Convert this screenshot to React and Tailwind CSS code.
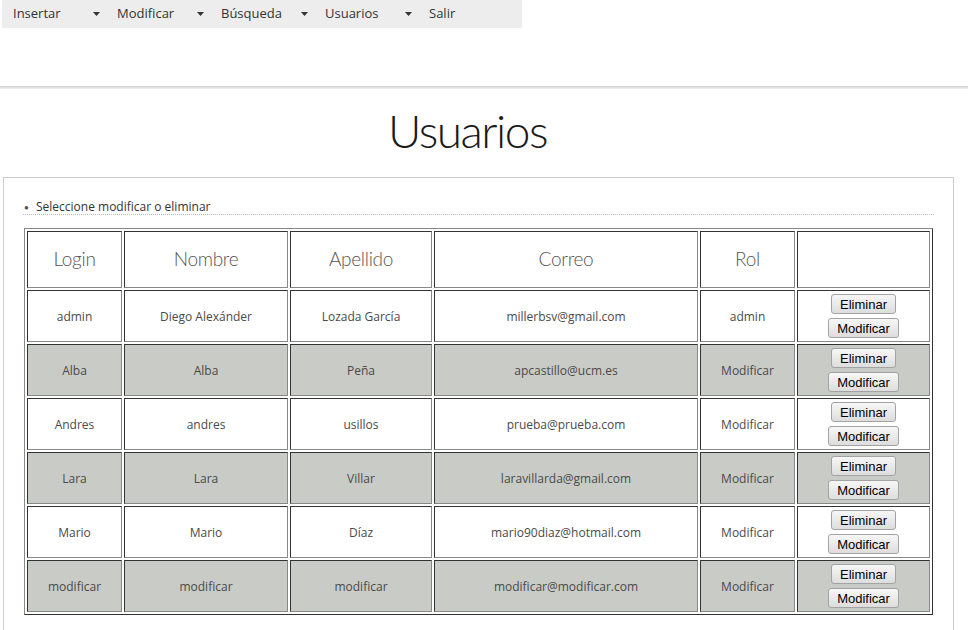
import React from "react";

const rows = [
  ["admin", "Diego Alexánder", "Lozada García", "millerbsv@gmail.com", "admin"],
  ["Alba", "Alba", "Peña", "apcastillo@ucm.es", "Modificar"],
  ["Andres", "andres", "usillos", "prueba@prueba.com", "Modificar"],
  ["Lara", "Lara", "Villar", "laravillarda@gmail.com", "Modificar"],
  ["Mario", "Mario", "Díaz", "mario90diaz@hotmail.com", "Modificar"],
  ["modificar", "modificar", "modificar", "modificar@modificar.com", "Modificar"],
];

const headers = ["Login", "Nombre", "Apellido", "Correo", "Rol", ""];
const navItems = ["Insertar", "Modificar", "Búsqueda", "Usuarios", "Salir"];

function Arrow() {
  return (
    <svg width="7" height="4" viewBox="0 0 7 4" className="block">
      <polygon points="0,0 7,0 3.5,4" fill="#333" />
    </svg>
  );
}

function Btn({ children }) {
  return (
    <button className="h-[20px] px-[8px] border border-[#a3a3a3] rounded-[3px] bg-gradient-to-b from-[#f7f7f7] to-[#dddddd] text-[13px] leading-none text-black font-['Liberation_Sans',Arial,sans-serif]">
      {children}
    </button>
  );
}

export default function App() {
  return (
    <div className="bg-white min-h-[630px] font-['Open_Sans',sans-serif] text-[#444]">
      <nav className="ml-[2px] w-[520px] h-[28px] bg-[#ededed] flex">
        {navItems.map((n, i) => (
          <div key={n} className="w-[104px] flex items-center justify-between pl-[11px] pr-[6px] text-[13px] text-[#333]">
            <span>{n}</span>
            {i < 4 && <Arrow />}
          </div>
        ))}
      </nav>
      <div className="mt-[58px] h-[3px] bg-gradient-to-b from-[#cfcfcf] to-[#f3f3f3]" />
      <div className="h-[88px] flex items-center justify-center pr-[33px] pb-[4px]">
        <h1 className="font-['Lato',sans-serif] font-light text-[46px] leading-none text-[#1a1a1a] tracking-[-1.5px]">
          Usuarios
        </h1>
      </div>
      <div className="ml-[3px] w-[951px] border border-[#cccccc] pl-[19px] pr-[19px] pt-[21px] pb-[40px]">
        <ul>
          <li className="flex items-center h-[16px] border-b border-dotted border-[#bbbbbb] text-[12px] leading-[15px] text-[#333]">
            <span className="w-[13px] pl-[1px] text-[8px] text-[#555]">●</span>
            <span>Seleccione modificar o eliminar</span>
          </li>
        </ul>
        <div className="mt-[13px] ml-[1px] w-[909px] grid grid-cols-[95px_164px_142px_264px_95px_133px] gap-[2px] p-[2px] border border-t-[#888] border-l-[#888] border-b-[#333] border-r-[#333]">
          {headers.map((h, i) => (
            <div
              key={"h" + i}
              className="h-[57px] flex items-center justify-center pb-[1px] border border-t-[#333] border-l-[#333] border-b-[#888] border-r-[#888] bg-white font-['Lato',sans-serif] font-light text-[19px] tracking-[-0.3px] text-[#555]"
            >
              {h}
            </div>
          ))}
          {rows.map((r, ri) => {
            const bg = ri % 2 === 1 ? "bg-[#c9cbc6]" : "bg-white";
            return (
              <React.Fragment key={ri}>
                {r.map((c, ci) => (
                  <div
                    key={ci}
                    className={`h-[52px] flex items-center justify-center text-center pt-[2px] border border-t-[#333] border-l-[#333] border-b-[#888] border-r-[#888] text-[12px] text-[#4a4a4a] ${bg}`}
                  >
                    {c}
                  </div>
                ))}
                <div
                  className={`h-[52px] flex flex-col items-center justify-center gap-[4px] border border-t-[#333] border-l-[#333] border-b-[#888] border-r-[#888] ${bg}`}
                >
                  <Btn>Eliminar</Btn>
                  <Btn>Modificar</Btn>
                </div>
              </React.Fragment>
            );
          })}
        </div>
      </div>
    </div>
  );
}
